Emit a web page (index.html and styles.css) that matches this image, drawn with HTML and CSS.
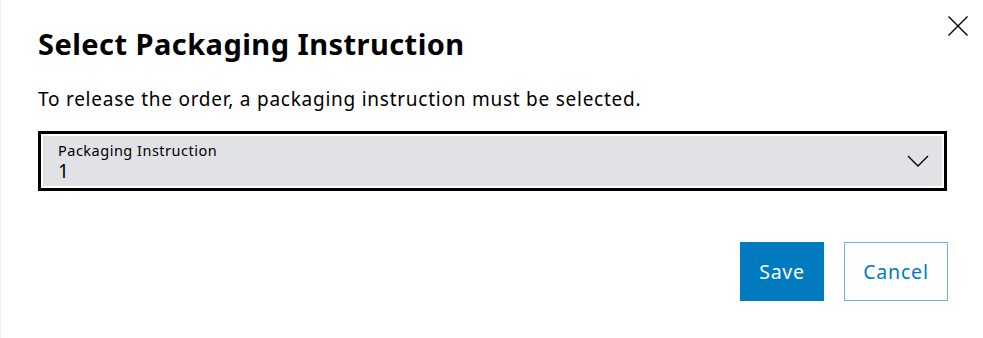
FILE: index.html
```html
<!DOCTYPE html>
<html lang="en">
<head>
<meta charset="utf-8">
<link rel="stylesheet" href="styles.css">
</head>
<body>
<div class="dialog">
  <button class="close" aria-label="Close">
    <svg width="22" height="22" viewBox="0 0 22 22"><path d="M1.5 1.5 L20.5 20.5 M20.5 1.5 L1.5 20.5" stroke="#000" stroke-width="1.4" fill="none"/></svg>
  </button>
  <h1 class="title">Select Packaging Instruction</h1>
  <p class="text">To release the order, a packaging instruction must be selected.</p>
  <div class="field">
    <div class="field-inner">
      <span class="label">Packaging Instruction</span>
      <span class="value">1</span>
    </div>
    <svg class="chevron" width="22" height="12" viewBox="0 0 22 12"><path d="M1 1 L11 11 L21 1" stroke="#000" stroke-width="1.4" fill="none"/></svg>
  </div>
  <div class="actions">
    <button class="btn primary">Save</button>
    <button class="btn secondary">Cancel</button>
  </div>
</div>
</body>
</html>
```
FILE: styles.css
```css
html, body { margin: 0; padding: 0; background: #fff; }
body { font-family: "Noto Sans", "Liberation Sans", sans-serif; color: #000; }
.dialog {
  position: relative;
  width: 983px;
  height: 338px;
  box-sizing: border-box;
  border-left: 1px solid #ececec;
  padding: 24px 35px 0 37px;
}
.close {
  position: absolute;
  top: 15px;
  right: 14px;
  background: none;
  border: 0;
  padding: 0;
  width: 22px;
  height: 22px;
  cursor: pointer;
}
.close svg { display: block; }
.title {
  margin: 0;
  font-size: 29px;
  line-height: 40px;
  font-weight: 700;
  letter-spacing: 0.45px;
}
.text {
  margin: 22px 0 0;
  font-size: 19px;
  line-height: 26px;
  letter-spacing: 0.75px;
}
.field {
  margin-top: 24px;
  margin-left: 5px;
  width: 899px;
  height: 50px;
  background: #e0e2e5;
  outline: 3px solid #000;
  outline-offset: 2px;
  display: flex;
  align-items: center;
  box-sizing: border-box;
  padding: 0 13px 0 15px;
}
.field-inner { flex: 1; display: flex; flex-direction: column; }
.label { font-size: 14.5px; line-height: 17px; margin-top: 3px; letter-spacing: 0.5px; }
.value { font-size: 19px; line-height: 24px; }
.chevron { display: block; }
.actions {
  display: flex;
  justify-content: flex-end;
  gap: 20px;
  margin-top: 56px;
}
.btn {
  height: 59px;
  font-family: inherit;
  font-size: 19.5px;
  letter-spacing: 0.8px;
  box-sizing: border-box;
  cursor: pointer;
  padding: 0;
}
.primary {
  width: 84px;
  background: #007bc0;
  color: #fff;
  border: 0;
}
.secondary {
  width: 104px;
  background: #fff;
  color: #007bc0;
  border: 1px solid #6cb4e0;
}
```
